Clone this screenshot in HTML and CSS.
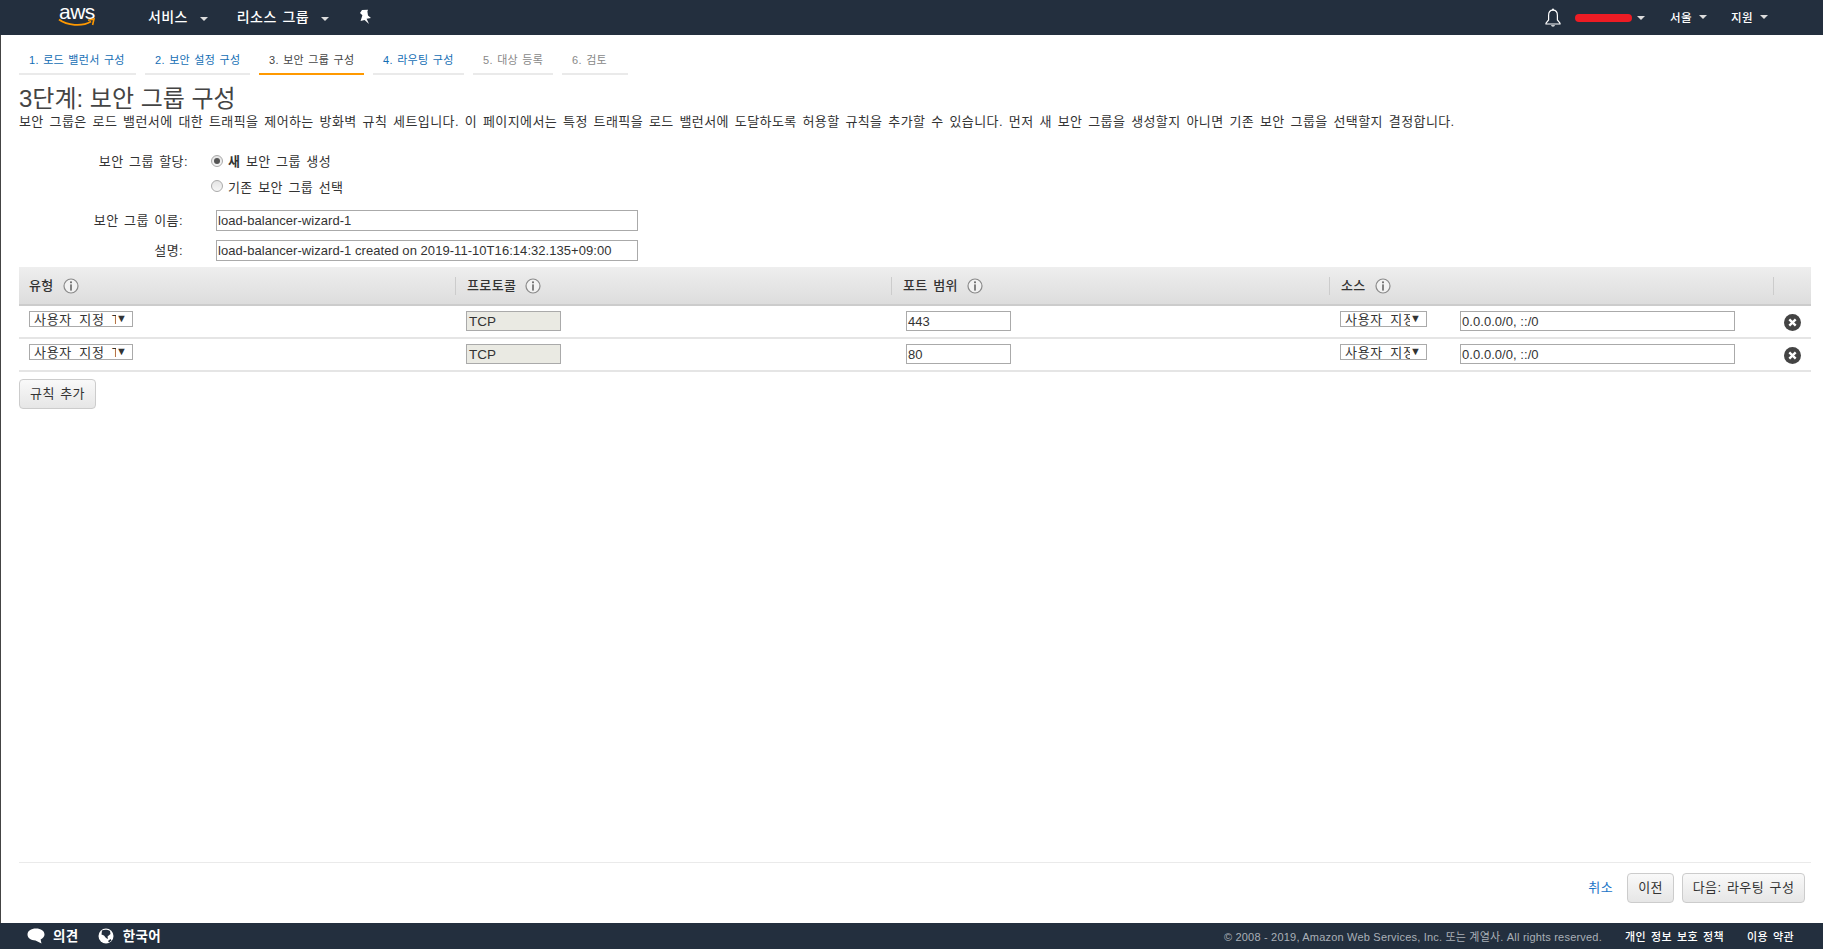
FILE: index.html
```html
<!DOCTYPE html>
<html lang="ko">
<head>
<meta charset="utf-8">
<title>3단계: 보안 그룹 구성</title>
<link rel="stylesheet" href="styles.css">
</head>
<body>
<header class="nav">
  <a class="logo"><span class="logo-text">aws</span>
    <svg class="logo-smile" viewBox="0 0 38 10" width="38" height="10"><path d="M1 1.5C9 7.5 24 9 33 3.5" fill="none" stroke="#f90" stroke-width="1.8"/><path d="M30 2.2L36 1L34.6 7" fill="none" stroke="#f90" stroke-width="1.6"/></svg>
  </a>
  <span class="nav-item nav-services">서비스<i class="caret caret-big"></i></span>
  <span class="nav-item nav-groups">리소스 그룹<i class="caret caret-big"></i></span>
  <svg class="pin" viewBox="0 0 14 16" width="14" height="16"><path d="M4 1L10 .8 9.4 2.4 10 6.4 13 9 8.6 9.8 11 15 6.6 11 2.6 12 4.4 6.2 2 4z" fill="#fff"/></svg>
  <div class="nav-right">
    <svg class="bell" viewBox="0 0 16 20" width="16" height="20"><path d="M8 2.2C4.8 2.2 3.6 4.6 3.6 7.4V12L1 15.2V16H15V15.2L12.4 12V7.4C12.4 4.6 11.2 2.2 8 2.2Z" fill="none" stroke="#fff" stroke-width="1.2"/><path d="M6 17.2C6.4 19 9.6 19 10 17.2Z" fill="#fff"/><circle cx="8" cy="1.6" r="1" fill="#fff"/></svg>
    <span class="redacted"></span><i class="caret caret-user"></i>
    <span class="nav-small nav-region">서울<i class="caret"></i></span>
    <span class="nav-small nav-support">지원<i class="caret"></i></span>
  </div>
</header>

<main class="page">
  <ol class="steps">
    <li class="step step-1">1. 로드 밸런서 구성</li>
    <li class="step step-2">2. 보안 설정 구성</li>
    <li class="step step-3 active">3. 보안 그룹 구성</li>
    <li class="step step-4">4. 라우팅 구성</li>
    <li class="step step-5 off">5. 대상 등록</li>
    <li class="step step-6 off">6. 검토</li>
  </ol>
  <h1 class="title">3단계: 보안 그룹 구성</h1>
  <p class="intro">보안 그룹은 로드 밸런서에 대한 트래픽을 제어하는 방화벽 규칙 세트입니다. 이 페이지에서는 특정 트래픽을 로드 밸런서에 도달하도록 허용할 규칙을 추가할 수 있습니다. 먼저 새 보안 그룹을 생성할지 아니면 기존 보안 그룹을 선택할지 결정합니다.</p>

  <div class="radio-row first">
    <span class="radio-label">보안 그룹 할당:</span>
    <label class="radio-opt"><span class="radio checked"></span><span><b>새</b> 보안 그룹 생성</span></label>
  </div>
  <div class="radio-row">
    <span class="radio-label"></span>
    <label class="radio-opt"><span class="radio"></span><span>기존 보안 그룹 선택</span></label>
  </div>

  <div class="field-row name-row">
    <span class="field-label">보안 그룹 이름:</span>
    <span class="box wide">load-balancer-wizard-1</span>
  </div>
  <div class="field-row desc-row">
    <span class="field-label">설명:</span>
    <span class="box wide">load-balancer-wizard-1 created on 2019-11-10T16:14:32.135+09:00</span>
  </div>

  <div class="rules">
    <div class="rules-head">
      <div class="th th-type"><span>유형</span><svg class="info"><use href="#i-info"/></svg></div>
      <div class="th th-proto"><span>프로토콜</span><svg class="info"><use href="#i-info"/></svg></div>
      <div class="th th-port"><span>포트 범위</span><svg class="info"><use href="#i-info"/></svg></div>
      <div class="th th-src"><span>소스</span><svg class="info"><use href="#i-info"/></svg></div>
      <div class="th th-end"></div>
    </div>
    <div class="rule">
      <div class="td td-type"><span class="sel sel-type"><span class="sel-text">사용자 지정 TCP 규칙</span><span class="sel-arrow">▼</span></span></div>
      <div class="td td-proto"><span class="box box-off">TCP</span></div>
      <div class="td td-port"><span class="box box-port">443</span></div>
      <div class="td td-src"><span class="sel sel-src"><span class="sel-text">사용자 지정</span><span class="sel-arrow">▼</span></span><span class="box box-cidr">0.0.0.0/0, ::/0</span></div>
      <div class="td td-end"><svg class="remove"><use href="#i-x"/></svg></div>
    </div>
    <div class="rule">
      <div class="td td-type"><span class="sel sel-type"><span class="sel-text">사용자 지정 TCP 규칙</span><span class="sel-arrow">▼</span></span></div>
      <div class="td td-proto"><span class="box box-off">TCP</span></div>
      <div class="td td-port"><span class="box box-port">80</span></div>
      <div class="td td-src"><span class="sel sel-src"><span class="sel-text">사용자 지정</span><span class="sel-arrow">▼</span></span><span class="box box-cidr">0.0.0.0/0, ::/0</span></div>
      <div class="td td-end"><svg class="remove"><use href="#i-x"/></svg></div>
    </div>
  </div>
  <button class="btn add-rule">규칙 추가</button>

  <div class="actions">
    <a class="cancel">취소</a>
    <button class="btn btn-prev">이전</button>
    <button class="btn btn-next">다음: 라우팅 구성</button>
  </div>
</main>

<footer class="foot">
  <svg class="foot-icon bubble" viewBox="0 0 18 16" width="18" height="16"><path d="M9 .5C4 .5.5 3 .5 6.5S4 12.4 8.5 12.4L14.5 15.5 13.6 11.4C16 10.3 17.5 8.6 17.5 6.5 17.5 3 14 .5 9 .5Z" fill="#fff"/></svg>
  <span class="foot-link feedback">의견</span>
  <svg class="foot-icon globe" viewBox="0 0 16 16" width="16" height="16"><circle cx="8" cy="8" r="7.5" fill="#fff"/><path d="M4 2.5C6 1.5 10 1.5 12 3L12.5 6 9.5 8.5 10 11 8 10 6 7.5 3.5 6.5ZM10 13L12.5 11 13.5 12.5 11 14.5Z" fill="#232f3e"/></svg>
  <span class="foot-link lang">한국어</span>
  <div class="foot-right">
    <span class="copy">© 2008 - 2019, Amazon Web Services, Inc. 또는 계열사. All rights reserved.</span>
    <span class="foot-small privacy">개인 정보 보호 정책</span>
    <span class="foot-small terms">이용 약관</span>
  </div>
</footer>

<svg class="defs" width="0" height="0">
  <symbol id="i-info" viewBox="0 0 16 16"><circle cx="8" cy="8" r="7" fill="#f2f2f2" stroke="#8a8a8a" stroke-width="1.2"/><rect x="7.1" y="3.4" width="1.8" height="1.8" fill="#666"/><rect x="7.2" y="6.4" width="1.6" height="6.2" fill="#666"/></symbol>
  <symbol id="i-x" viewBox="0 0 16 16"><circle cx="8" cy="8" r="8" fill="#444"/><path d="M5 5L11 11M11 5L5 11" stroke="#fff" stroke-width="2.2"/></symbol>
</svg>
</body>
</html>
```

FILE: styles.css
```css
* { box-sizing: border-box; }
html, body { margin: 0; height: 100%; }
body {
  display: flex;
  flex-direction: column;
  height: 949px;
  overflow: hidden;
  background: #fff;
  color: #333;
  font-family: "Liberation Sans", "Noto Sans CJK KR", sans-serif;
  font-size: 13px;
  letter-spacing: .4px;
  word-spacing: 1.5px;
}

/* top bar */
.nav {
  flex: 0 0 35px;
  display: flex;
  align-items: center;
  background: #232f3e;
  color: #fff;
  font-weight: 500;
}
.logo { position: relative; width: 38px; height: 35px; margin-left: 59px; display: block; }
.logo-text { position: absolute; left: 0; top: 0; font-size: 21px; line-height: 24px; letter-spacing: -.5px; color: #fff; }
.logo-smile { position: absolute; left: -1px; top: 18px; }
.nav-item { font-size: 14px; display: inline-flex; align-items: center; padding-bottom: 3px; }
.nav-services { margin-left: 51px; }
.nav-groups { margin-left: 29px; }
.caret { display: inline-block; width: 0; height: 0; border: 4px solid transparent; border-top: 4px solid #ddd; border-bottom: 0; margin-left: 7px; }
.caret-big { margin-left: 12px; margin-top: 5px; }
.pin { margin-left: 29px; margin-bottom: 2px; }
.nav-right { margin-left: auto; display: flex; align-items: center; padding-right: 55px; }
.bell { margin-right: 14px; }
.redacted { width: 57px; height: 8px; background: #ed1c24; border-radius: 4px; }
.caret-user { margin-left: 5px; }
.nav-small { font-size: 11.5px; display: inline-flex; align-items: center; padding-bottom: 2px; }
.nav-region { margin-left: 25px; }
.nav-support { margin-left: 24px; }

/* page body */
.page {
  flex: 1;
  display: flex;
  flex-direction: column;
  min-height: 0;
  padding: 0 12px 0 18px;
  border-left: 1px solid #444;
}
.steps { list-style: none; display: flex; gap: 9px; margin: 12px 0 0; padding: 0; }
.step { height: 28px; padding: 0 10px; line-height: 26px; font-size: 11px; letter-spacing: .3px; word-spacing: 1px; color: #146eb4; border-bottom: 2px solid #eaeaea; white-space: nowrap; }
.step-1 { width: 117px; }
.step-2 { width: 105px; }
.step-3 { width: 105px; }
.step-4 { width: 91px; }
.step-5 { width: 80px; }
.step-6 { width: 66px; }
.step.active { color: #444; border-bottom-color: #f90; }
.step.off { color: #888; }

.title { margin: 9px 0 0; font-size: 24px; line-height: 29px; font-weight: 400; color: #444; letter-spacing: 0; word-spacing: 0; }
.intro { margin: 0; font-size: 13px; line-height: 18px; white-space: nowrap; word-spacing: 1.85px; }

.radio-row { display: flex; align-items: center; height: 25px; }
.radio-row.first { margin-top: 17px; }
.radio-row.first + .radio-row { height: 26px; }
.radio-label { width: 169px; text-align: right; font-size: 13px; }
.radio-opt { display: flex; align-items: center; margin-left: 23px; gap: 5px; }
.radio { width: 12px; height: 12px; border-radius: 50%; border: 1px solid #aaa; background: linear-gradient(#e4e4e4, #f6f6f6); position: relative; }
.radio.checked::after { content: ""; position: absolute; left: 2px; top: 2px; width: 6px; height: 6px; border-radius: 50%; background: #555; }

.field-row { display: flex; align-items: center; height: 21px; }
.name-row { margin-top: 11px; }
.desc-row { margin-top: 9px; }
.field-label { width: 164px; text-align: right; margin-right: 33px; font-size: 13px; padding-bottom: 3px; }
.box { display: block; height: 20px; border: 1px solid #aaa; padding: 0 1px; line-height: 20px; font-size: 13px; color: #333; background: #fff; white-space: nowrap; overflow: hidden; letter-spacing: .05px; word-spacing: 0; }
.box.wide { width: 422px; height: 21px; line-height: 19px; }
.box-off { width: 95px; background: #eaeae3; padding-left: 2px; font-size: 13.5px; }
.box-port { width: 105px; }
.box-cidr { width: 275px; margin-left: 33px; }

/* rules table */
.rules { margin-top: 6px; width: 1792px; }
.rules-head, .rule { display: grid; grid-template-columns: 436px 436px 438px 444px 38px; }
.rules-head { height: 39px; background: linear-gradient(#eeeeee, #dddddd); border-bottom: 2px solid #ccc; align-items: center; }
.th { height: 18px; display: flex; align-items: center; gap: 9px; padding-left: 11px; border-left: 1px solid #ccc; font-size: 13px; font-weight: 500; color: #333; }
.th span { padding-bottom: 2px; }
.th-type { border-left: 0; padding-left: 10px; }
.th-port { padding-left: 11px; }
.info { width: 16px; height: 16px; }
.rule { height: 33px; border-bottom: 2px solid #e5e5e5; }
.td { padding-top: 5px; display: flex; align-items: flex-start; }
.td-type { padding-left: 10px; }
.td-proto { padding-left: 11px; }
.td-port { padding-left: 15px; }
.td-src { padding-left: 11px; }
.td-end { padding: 8px 0 0 11px; }
.remove { width: 17px; height: 17px; }
.sel { display: flex; height: 16px; border: 1px solid #aaa; background: #fff; overflow: hidden; font-size: 13px; line-height: 15px; padding-left: 4px; letter-spacing: .7px; word-spacing: 3px; }
.sel-type { width: 104px; }
.sel-src { width: 87px; }
.sel-text { flex: 1; min-width: 0; overflow: hidden; white-space: nowrap; }
.sel-arrow { flex: 0 0 auto; width: 16px; font-size: 11px; line-height: 13px; text-align: left; color: #333; letter-spacing: 0; }

/* buttons */
.btn { display: block; height: 30px; border: 1px solid #ccc; border-radius: 4px; background: linear-gradient(#f9f9f9, #e6e6e6); color: #333; font-family: inherit; font-size: 13px; padding: 0 9px 3px; letter-spacing: inherit; word-spacing: inherit; }
.add-rule { margin-top: 7px; width: 77px; align-self: flex-start; }

.actions { margin-top: auto; display: flex; align-items: center; justify-content: flex-end; border-top: 1px solid #eaeaea; padding: 10px 6px 20px 0; }
.cancel { color: #1a73c7; font-size: 13px; margin-right: 14px; padding-bottom: 3px; }
.btn-prev { width: 47px; padding: 0 0 3px; margin-right: 8px; }
.btn-next { width: 123px; padding: 0 0 3px; }

/* footer */
.foot { flex: 0 0 26px; display: flex; align-items: center; background: #232f3e; color: #fff; padding-left: 27px; }
.foot-link { font-size: 13.5px; font-weight: 700; padding-bottom: 2px; }
.feedback { margin-left: 8px; }
.globe { margin-left: 19px; }
.lang { margin-left: 9px; }
.foot-right { margin-left: auto; display: flex; align-items: center; padding-right: 29px; }
.copy { font-size: 11px; color: #aab0b7; letter-spacing: .2px; word-spacing: 0; }
.foot-small { font-size: 11px; font-weight: 500; }
.privacy { margin-left: 23px; }
.terms { margin-left: 23px; }
.defs { position: absolute; }
```
